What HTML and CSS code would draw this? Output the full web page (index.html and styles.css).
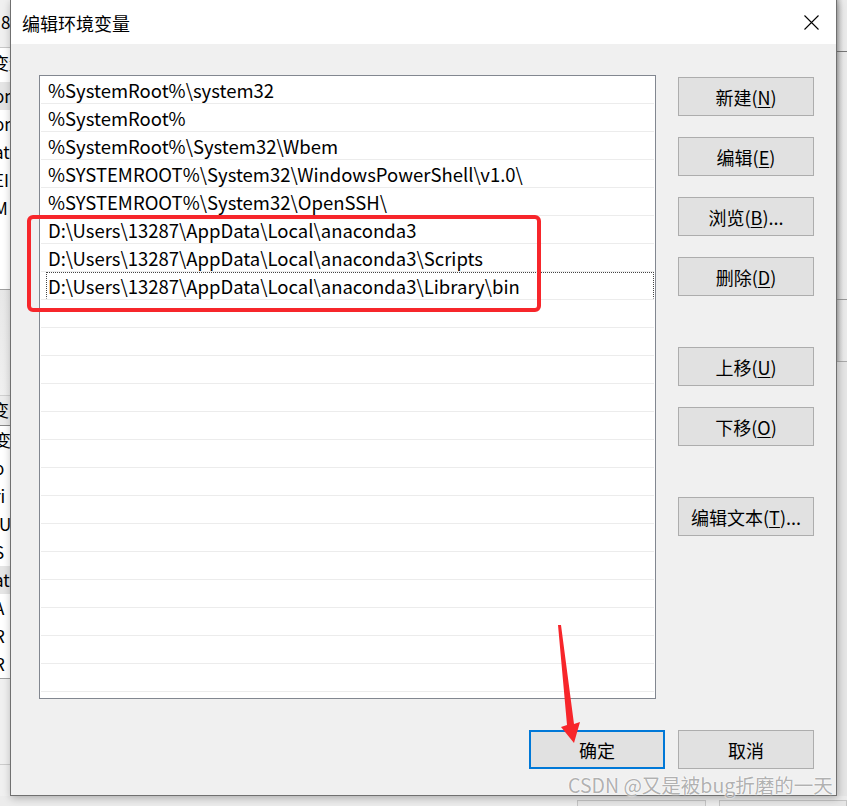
FILE: index.html
```html
<!DOCTYPE html>
<html lang="zh-CN">
<head>
<meta charset="utf-8">
<title>编辑环境变量</title>
<link rel="stylesheet" href="styles.css">
</head>
<body>
<div class="desk">
  <div class="bg-left">
    <div class="bl-head"><span class="bl-t">8</span></div>
    <div class="bl-label">变量</div>
    <div class="bl-list">
      <div class="bl-row sel">on</div>
      <div class="bl-row">on</div>
      <div class="bl-row">at</div>
      <div class="bl-row">EI</div>
      <div class="bl-row">M</div>
    </div>
    <div class="bl-gap"></div>
    <div class="bl-label2">变</div>
    <div class="bl-list2">
      <div class="bl-row">变量</div>
      <div class="bl-row">o</div>
      <div class="bl-row">ri</div>
      <div class="bl-row">IU</div>
      <div class="bl-row">S</div>
      <div class="bl-row sel">at</div>
      <div class="bl-row">A</div>
      <div class="bl-row">R</div>
      <div class="bl-row">R</div>
    </div>
    <div class="bl-foot"></div>
  </div>
  <div class="bg-right">
    <div class="br-a"></div>
    <div class="br-b"></div>
    <div class="br-c"></div>
    <div class="br-d"></div>
  </div>
  <div class="bg-bottom">
    <span class="bgbtn"></span>
    <span class="bgbtn"></span>
  </div>

  <div class="dialog">
    <div class="titlebar">
      <span class="title">编辑环境变量</span>
      <svg class="close" width="15" height="15" viewBox="0 0 15 15"><path d="M0.5 0.5 L14.5 14.5 M14.5 0.5 L0.5 14.5" stroke="#000" stroke-width="1.1" fill="none"/></svg>
    </div>
    <div class="content">
      <div class="main">
        <div class="list">
          <div class="row">%SystemRoot%\system32</div>
          <div class="row">%SystemRoot%</div>
          <div class="row">%SystemRoot%\System32\Wbem</div>
          <div class="row">%SYSTEMROOT%\System32\WindowsPowerShell\v1.0\</div>
          <div class="row">%SYSTEMROOT%\System32\OpenSSH\</div>
          <div class="row">D:\Users\13287\AppData\Local\anaconda3</div>
          <div class="row">D:\Users\13287\AppData\Local\anaconda3\Scripts</div>
          <div class="row focus"><span class="focus-box">D:\Users\13287\AppData\Local\anaconda3\Library\bin</span></div>
          <div class="row"></div><div class="row"></div><div class="row"></div><div class="row"></div>
          <div class="row"></div><div class="row"></div><div class="row"></div><div class="row"></div>
          <div class="row"></div><div class="row"></div><div class="row"></div><div class="row"></div>
          <div class="row"></div><div class="row"></div>
        </div>
        <div class="side">
          <button class="btn">新建(<u>N</u>)</button>
          <button class="btn">编辑(<u>E</u>)</button>
          <button class="btn">浏览(<u>B</u>)...</button>
          <button class="btn">删除(<u>D</u>)</button>
          <button class="btn gap">上移(<u>U</u>)</button>
          <button class="btn">下移(<u>O</u>)</button>
          <button class="btn gap">编辑文本(<u>T</u>)...</button>
        </div>
      </div>
      <div class="footer">
        <button class="btn default">确定</button>
        <button class="btn">取消</button>
      </div>
    </div>
  </div>

  <div class="highlight"></div>
  <svg class="arrow" width="40" height="130" viewBox="0 0 40 130">
    <polygon points="8,5 11,5 24,104 30,102 24,123 11,107 17,105" fill="#f7262b"/>
  </svg>
  <div class="watermark">CSDN @又是被bug折磨的一天</div>
</div>
</body>
</html>
```
FILE: styles.css
```css
* { box-sizing: border-box; }
html, body { margin: 0; padding: 0; }
body {
  font-family: "Noto Sans CJK SC", "Noto Sans", sans-serif;
  background: #f0f0f0;
  color: #000;
}
.desk {
  position: relative;
  width: 847px;
  height: 806px;
  overflow: hidden;
  background: #f0f0f0;
}

/* background window, left strip */
.bg-left {
  position: absolute;
  left: 0;
  top: 0;
  width: 10px;
  height: 806px;
  overflow: hidden;
  display: flex;
  flex-direction: column;
  font-size: 17px;
  line-height: 28px;
  white-space: nowrap;
}
.bl-head { height: 48px; background: #f0f0f0; border-bottom: 1px solid #c8c8c8; padding-top: 8px; }
.bl-t { margin-left: 1px; }
.bl-label { height: 34px; background: #fff; margin-left: -8px; line-height: 30px; }
.bl-list { background: #fff; height: 208px; border-bottom: 1px solid #a0a0a0; }
.bl-row { height: 28px; margin-left: -6px; }
.bl-row.sel { background: #e5e5e5; }
.bl-gap { height: 106px; background: linear-gradient(#e8e8e8, #f0f0f0); border-bottom: 1px solid #d0d0d0; }
.bl-label2 { height: 30px; margin-left: -8px; background: #ececec; border-bottom: 1px solid #888; }
.bl-list2 { background: #fff; border-bottom: 1px solid #a0a0a0; }
.bl-foot { height: 86px; background: #f0f0f0; border-bottom: 1px solid #ccc; }

/* background window, right strip */
.bg-right {
  position: absolute;
  left: 837px;
  top: 0;
  width: 10px;
  height: 806px;
  background: linear-gradient(90deg, #bdbdbd 0, #dcdcdc 3px, #ebebeb 6px);
  display: flex;
  flex-direction: column;
}
.br-a { height: 52px; border-bottom: 1px solid #777; }
.br-b { height: 248px; border-bottom: 1px solid #9a9a9a; }
.br-c { height: 62px; border-bottom: 1px solid #aaa; }
.br-d { flex: 1; background: #e6e6e6; }

.bg-bottom {
  position: absolute;
  left: 0;
  top: 796px;
  width: 847px;
  height: 10px;
  background: #ececec;
  display: flex;
  padding: 4px 0 0 577px;
  gap: 13px;
}
.bgbtn { width: 135px; height: 20px; border: 1px solid #c4c4c4; background: #e6e6e6; }

/* dialog */
.dialog {
  position: absolute;
  left: 10px;
  top: 0;
  width: 827px;
  height: 796px;
  border: 1px solid #707070;
  border-top: 0;
  background: #f0f0f0;
  box-shadow: 1px 2px 8px rgba(0,0,0,0.28);
  display: flex;
  flex-direction: column;
}
.titlebar {
  height: 44px;
  background: #fff;
  display: flex;
  align-items: center;
  justify-content: space-between;
  padding: 0 17px 0 11px;
}
.title { font-size: 18px; line-height: 24px; padding-top: 2px; }
.close { display: block; }

.content {
  flex: 1;
  padding: 31px 22px 0 28px;
}
.main {
  display: flex;
  gap: 22px;
}
.list {
  width: 617px;
  height: 624px;
  background: #fff;
  border: 1px solid #828790;
  overflow: hidden;
  font-size: 18.5px;
}
.row {
  height: 28px;
  line-height: 28px;
  padding-left: 7px;
  border-bottom: 1px solid #ececec;
  margin: 0 1px;
  white-space: nowrap;
}
.row.focus { padding-left: 5px; }
.focus-box {
  display: block;
  height: 27px;
  border: 1px dotted #444;
  border-bottom-color: transparent;
  padding-left: 1px;
  line-height: 26px;
}

.side {
  width: 136px;
  display: flex;
  flex-direction: column;
  gap: 21px;
  padding-top: 2px;
}
.btn {
  width: 136px;
  height: 39px;
  background: #e1e1e1;
  border: 1px solid #adadad;
  font-family: "Noto Sans CJK SC", "Noto Sans", sans-serif;
  font-size: 18px;
  color: #000;
  padding: 0;
  line-height: 36px;
}
.btn u { text-underline-offset: 2px; }
.btn.gap { margin-top: 30px; }
.footer {
  display: flex;
  justify-content: flex-end;
  gap: 13px;
  margin-top: 31px;
}
.btn.default { border: 2px solid #0078d7; line-height: 34px; }

/* annotations */
.highlight {
  position: absolute;
  left: 27px;
  top: 215px;
  width: 514px;
  height: 97px;
  border: 4px solid #f7262b;
  border-radius: 6px;
}
.arrow {
  position: absolute;
  left: 550px;
  top: 620px;
}
.watermark {
  position: absolute;
  left: 568px;
  top: 772px;
  font-size: 19.5px;
  line-height: 26px;
  color: rgba(110,110,110,0.55);
  text-shadow: 0 0 2px #fff, 0 0 1px #fff;
  white-space: nowrap;
}
```
